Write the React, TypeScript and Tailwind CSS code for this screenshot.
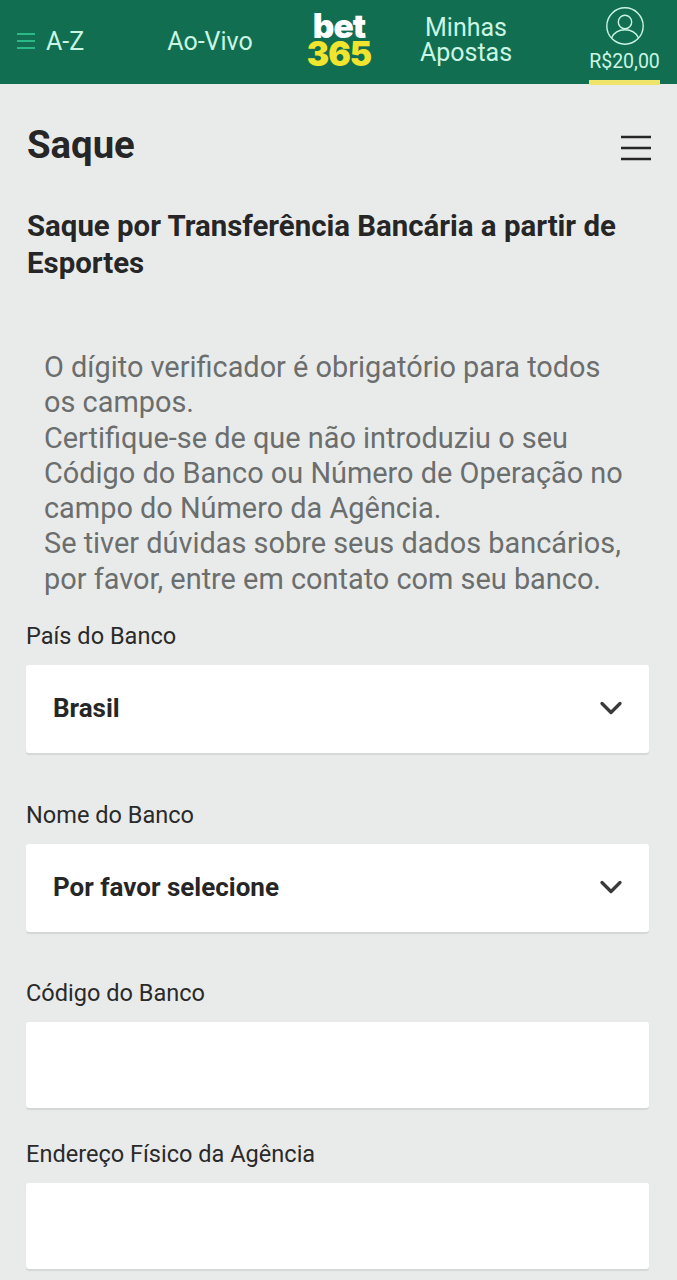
import React from 'react';
import { ChevronDown } from 'lucide-react';

const Field: React.FC<{ label: string; value?: string; className?: string }> = ({ label, value, className }) => (
  <div className={className}>
    <label className="block text-[23.550px] leading-[28px] text-[#2a2a2a]">{label}</label>
    <div className={`mt-[15px] ${value ? 'h-[88px] pb-[2px]' : 'h-[86px]'} bg-white rounded-[3px] shadow-[0_2px_1px_#d5d7d7] flex items-center justify-between pl-[27px] pr-[20px]`}>
      {value && <span className="text-[26px] font-bold text-[#262626]">{value}</span>}
      {value && <ChevronDown size={36} strokeWidth={2.2} className="text-[#3a3a3a]" />}
    </div>
  </div>
);

export default function App() {
  return (
    <div className="w-[677px] h-[1280px] overflow-hidden bg-[#e9ebeb] font-['Roboto',sans-serif]">
      <header className="h-[84px] bg-[#126e51] flex text-[#c9f5e2] text-[25px] leading-[25px]">
        <div className="w-[150px] pl-[17px] pb-[2px] flex items-center gap-[11px]">
          <svg width="18" height="18" viewBox="0 0 18 18" className="text-[#35d29b]">
            <path d="M0 2h18M0 9h18M0 16h18" stroke="currentColor" strokeWidth="1.6" />
          </svg>
          <span>A-Z</span>
        </div>
        <div className="w-[120px] pb-[2px] flex items-center justify-center">Ao-Vivo</div>
        <div className="w-[138px] pb-[4px] flex flex-col items-center justify-center font-['Inter',sans-serif] font-black text-[33.500px] leading-[28px] tracking-[-1px]">
          <span className="text-white">bet</span>
          <span className="text-[#f1e42f]">365</span>
        </div>
        <div className="w-[116px] pb-[4px] flex items-center justify-center text-center">Minhas<br />Apostas</div>
        <div className="ml-[65px] w-[71px] border-b-[5px] border-[#f0e36a] h-[85px] flex flex-col items-center pt-[7px]">
          <svg width="38" height="38" viewBox="0 0 38 38" fill="none" stroke="currentColor" strokeWidth="1.4">
            <circle cx="19" cy="19" r="18.2" />
            <circle cx="19" cy="15" r="6.7" />
            <path d="M5.5 31c2.500-5.500 7.500-8.200 13.500-8.200S30 25.500 32.500 31" />
          </svg>
          <span className="mt-[5px] text-[19.5px] leading-[24px] whitespace-nowrap">R$20,00</span>
        </div>
      </header>
      <main className="pl-[26px] pr-[28px]">
        <div className="pt-[38px] pl-[1px] flex items-center justify-between">
          <h1 className="text-[38.300px] leading-[46px] font-bold text-[#262626]">Saque</h1>
          <svg width="30" height="26" viewBox="0 0 30 26" className="mt-[5px] mr-[-2px]">
            <path d="M0 2h30M0 13h30M0 24h30" stroke="#262626" strokeWidth="2.4" />
          </svg>
        </div>
        <h2 className="mt-[40px] pl-[1px] text-[29.400px] leading-[37px] font-bold text-[#262626]">Saque por Transferência Bancária a partir de<br />Esportes</h2>
        <p className="mt-[68px] pl-[18px] text-[28.900px] leading-[35.300px] text-[#6b6e6d]">
          O dígito verificador é obrigatório para todos<br />
          os campos.<br />
          Certifique-se de que não introduziu o seu<br />
          Código do Banco ou Número de Operação no<br />
          campo do Número da Agência.<br />
          Se tiver dúvidas sobre seus dados bancários,<br />
          por favor, entre em contato com seu banco.
        </p>
        <Field className="mt-[25px]" label="País do Banco" value="Brasil" />
        <Field className="mt-[48px]" label="Nome do Banco" value="Por favor selecione" />
        <Field className="mt-[47px]" label="Código do Banco" />
        <Field className="mt-[32px]" label="Endereço Físico da Agência" />
      </main>
    </div>
  );
}
